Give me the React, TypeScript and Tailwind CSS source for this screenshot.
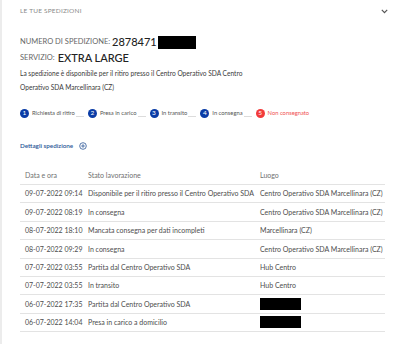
const steps = [
  { n: 1, label: 'Richiesta di ritiro' },
  { n: 2, label: 'Presa in carico' },
  { n: 3, label: 'In transito' },
  { n: 4, label: 'In consegna' },
]

const rows: { date: string; status: string; place: string | null }[] = [
  { date: '09-07-2022 09:14', status: 'Disponibile per il ritiro presso il Centro Operativo SDA', place: 'Centro Operativo SDA Marcellinara (CZ)' },
  { date: '09-07-2022 08:19', status: 'In consegna', place: 'Centro Operativo SDA Marcellinara (CZ)' },
  { date: '08-07-2022 18:10', status: 'Mancata consegna per dati incompleti', place: 'Marcellinara (CZ)' },
  { date: '08-07-2022 09:29', status: 'In consegna', place: 'Centro Operativo SDA Marcellinara (CZ)' },
  { date: '07-07-2022 03:55', status: 'Partita dal Centro Operativo SDA', place: 'Hub Centro' },
  { date: '07-07-2022 03:55', status: 'In transito', place: 'Hub Centro' },
  { date: '06-07-2022 17:35', status: 'Partita dal Centro Operativo SDA', place: null },
  { date: '06-07-2022 14:04', status: 'Presa in carico a domicilio', place: null },
]

export default function App() {
  return (
    <div className="h-[344px] w-[400px] overflow-hidden border-l-2 border-[#ececec] bg-white font-['Lato','Open_Sans',sans-serif] text-[#333]">
      <div className="flex h-[22px] items-center justify-between pl-[18px] pr-[12px]">
        <span className="text-[6.5px] uppercase tracking-[0.2px] text-[#8a8a8a]">Le tue spedizioni</span>
        <svg width="7" height="5" viewBox="0 0 7 5" fill="none">
          <path d="M0.8 0.8 L3.5 3.6 L6.2 0.8" stroke="#555" strokeWidth="1.2" />
        </svg>
      </div>

      <div className="pl-[18px]">
        <div className="mt-[13px] flex h-[14px] items-center">
          <span className="text-[7.5px] uppercase text-[#666]">Numero di spedizione:</span>
          <span className="ml-[2px] text-[11px] font-medium text-[#222]">2878471</span>
          <span className="ml-[1px] h-[13px] w-[38px] bg-black" />
        </div>
        <div className="mt-[2px] flex h-[14px] items-center">
          <span className="text-[7.5px] uppercase text-[#666]">Servizio:</span>
          <span className="ml-[3px] text-[11px] font-medium text-[#222]">EXTRA LARGE</span>
        </div>
        <p className="mt-[1px] w-[250px] text-[6.6px] leading-[14px] text-[#3a3a3a]">
          La spedizione è disponibile per il ritiro presso il Centro Operativo SDA Centro Operativo SDA Marcellinara (CZ)
        </p>

        <div className="mt-[13px] flex h-[12px] items-center">
          {steps.map((s) => (
            <div key={s.n} className="mr-[4px] flex items-center">
              <span className="flex h-[9px] w-[9px] items-center justify-center rounded-full bg-[#0a3ca6] text-[6.5px] text-white">
                {s.n}
              </span>
              <span className="ml-[3px] text-[5.8px] text-[#555]">{s.label}</span>
              <span className="ml-[1px] mt-[6px] h-px w-[8px] bg-[#dcdcdc]" />
            </div>
          ))}
          <div className="flex items-center">
            <span className="flex h-[9px] w-[9px] items-center justify-center rounded-full bg-[#f23b3b] text-[6.5px] text-white">
              5
            </span>
            <span className="ml-[3px] text-[5.8px] text-[#f05050]">Non consegnato</span>
          </div>
        </div>

        <div className="mt-[21px] flex h-[12px] items-center">
          <span className="text-[6.3px] font-semibold text-[#2b5597]">Dettagli spedizione</span>
          <svg className="ml-[6px]" width="8" height="8" viewBox="0 0 8 8" fill="none">
            <circle cx="4" cy="4" r="3.3" stroke="#2b5597" strokeWidth="0.8" />
            <path d="M4 2.2 V5.8 M2.2 4 H5.8" stroke="#2b5597" strokeWidth="0.8" />
          </svg>
        </div>

        <div className="mt-[14px] mr-[15px] text-[7px]">
          <div className="flex h-[19px] items-center border-b border-[#e3e3e3] text-[#707070]">
            <span className="w-[68px] pl-[5px]">Data e ora</span>
            <span className="w-[172px]">Stato lavorazione</span>
            <span>Luogo</span>
          </div>
          {rows.map((r, i) => (
            <div key={i} className="flex h-[18.4px] items-center border-b border-[#e3e3e3] text-[#4d4d4d]">
              <span className="w-[68px] pl-[5px]">{r.date}</span>
              <span className="w-[172px]">{r.status}</span>
              {r.place ? <span>{r.place}</span> : <span className="h-[12px] w-[41px] bg-black" />}
            </div>
          ))}
        </div>
      </div>
    </div>
  )
}
